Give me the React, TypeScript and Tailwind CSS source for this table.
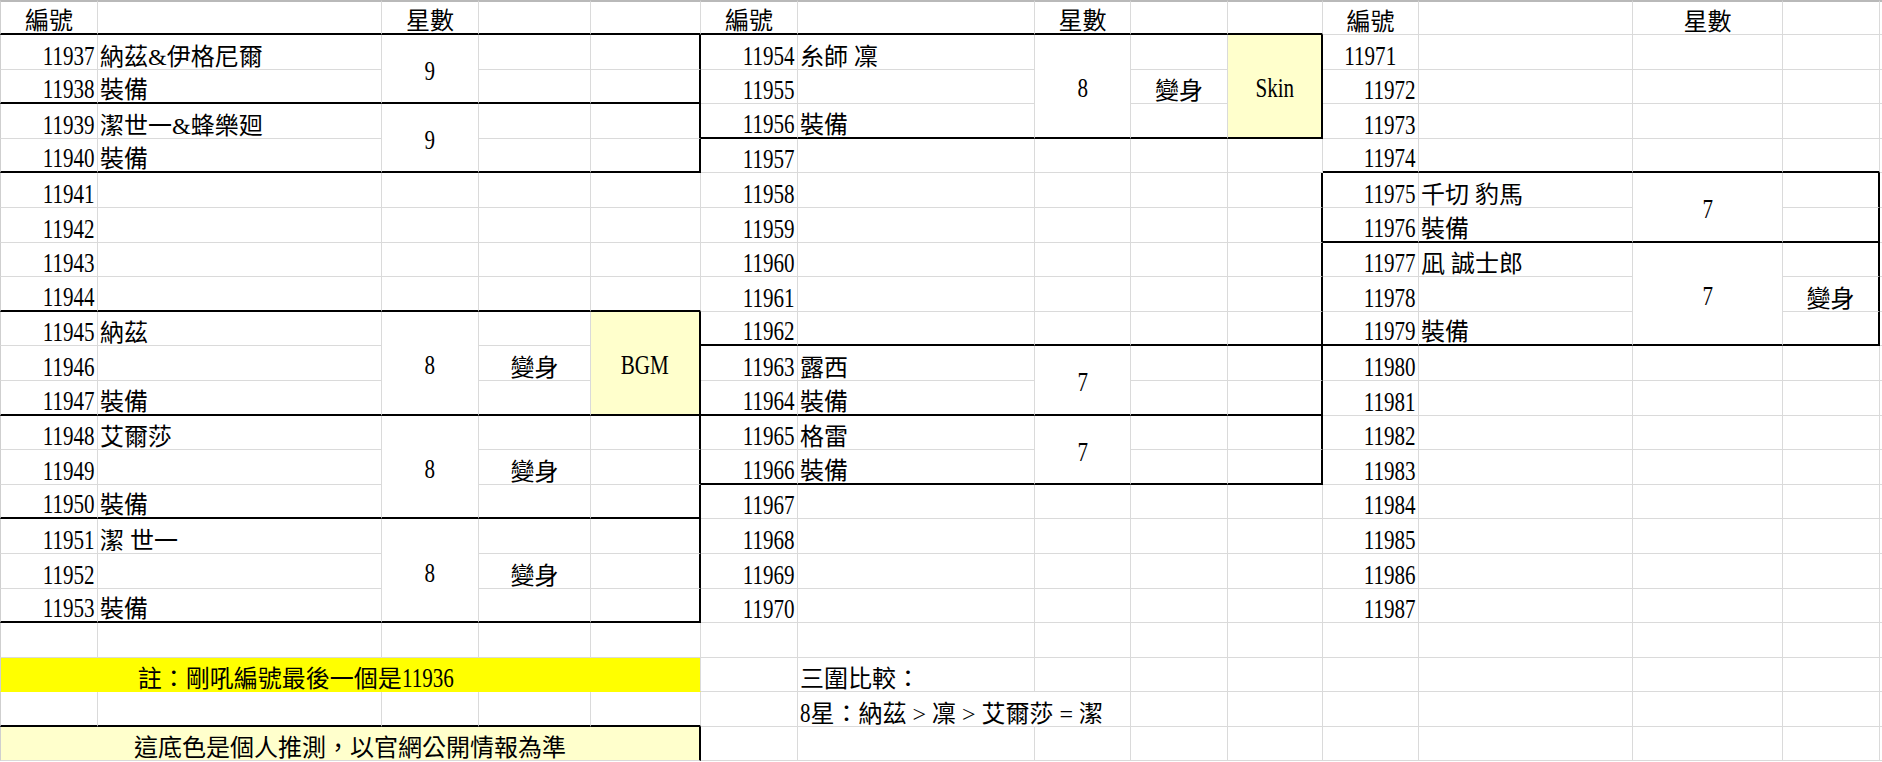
import type { ReactNode } from 'react';
import clsx from 'clsx';

type Align = 'left' | 'right' | 'center';

type Cell = {
  r: number;
  c: number;
  rs?: number;
  cs?: number;
  text?: ReactNode;
  align?: Align;
  middle?: boolean;
  fill?: 'note' | 'cream';
  pad?: string;
};

const ROWS = 22;
const COLS = 15;

const ROW_SPAN: Record<number, string> = { 1: '', 2: 'row-span-2', 3: 'row-span-3' };
const COL_SPAN: Record<number, string> = { 1: '', 2: 'col-span-2', 5: 'col-span-5' };

// the sheet's latin glyphs are tall and narrow
const Latin = ({
  children,
  origin = 'center',
  className,
}: {
  children: ReactNode;
  origin?: Align;
  className?: string;
}) => (
  <span
    className={clsx(
      'inline-block scale-x-[0.78] text-[27px] leading-[24px]',
      origin === 'right' ? 'origin-right' : origin === 'left' ? 'origin-left' : 'origin-center',
      className,
    )}
  >
    {children}
  </span>
);

// [firstRow, lastRow, firstCol, lastCol]
const boxes: [number, number, number, number][] = [
  [1, 2, 0, 4],
  [3, 4, 0, 4],
  [9, 11, 0, 4],
  [12, 14, 0, 4],
  [15, 17, 0, 4],
  [1, 3, 5, 9],
  [10, 11, 5, 9],
  [12, 13, 5, 9],
  [5, 6, 10, 13],
  [7, 9, 10, 13],
];

const hThick = new Set<string>();
const vThick = new Set<string>();
for (const [r0, r1, c0, c1] of boxes) {
  for (let c = c0; c <= c1; c++) {
    hThick.add(`${r0 - 1}:${c}`);
    hThick.add(`${r1}:${c}`);
  }
  for (let r = r0; r <= r1; r++) {
    if (c0 > 0) vThick.add(`${r}:${c0 - 1}`);
    vThick.add(`${r}:${c1}`);
  }
}
for (let c = 0; c <= 4; c++) hThick.add(`20:${c}`);
vThick.add('21:4');

const cells: Cell[] = [];

const heads: [number, string][] = [
  [0, '編號'],
  [2, '星數'],
  [5, '編號'],
  [7, '星數'],
  [10, '編號'],
  [12, '星數'],
];
heads.forEach(([c, text]) => cells.push({ r: 0, c, text, align: 'center' }));

for (let i = 0; i < 17; i++) {
  const r = i + 1;
  cells.push({ r, c: 0, text: <Latin origin="right">{11937 + i}</Latin>, align: 'right' });
  cells.push({ r, c: 5, text: <Latin origin="right">{11954 + i}</Latin>, align: 'right' });
  cells.push({
    r,
    c: 10,
    text: <Latin origin={i === 0 ? 'center' : 'right'}>{11971 + i}</Latin>,
    align: i === 0 ? 'center' : 'right',
  });
}

const names: [number, number, string][] = [
  [1, 1, '納茲&伊格尼爾'],
  [2, 1, '裝備'],
  [3, 1, '潔世一&蜂樂廻'],
  [4, 1, '裝備'],
  [9, 1, '納茲'],
  [11, 1, '裝備'],
  [12, 1, '艾爾莎'],
  [14, 1, '裝備'],
  [15, 1, '潔 世一'],
  [17, 1, '裝備'],
  [1, 6, '糸師 凜'],
  [3, 6, '裝備'],
  [10, 6, '露西'],
  [11, 6, '裝備'],
  [12, 6, '格雷'],
  [13, 6, '裝備'],
  [5, 11, '千切 豹馬'],
  [6, 11, '裝備'],
  [7, 11, '凪 誠士郎'],
  [9, 11, '裝備'],
];
names.forEach(([r, c, text]) => cells.push({ r, c, text, align: 'left' }));

// [row, rowSpan, col, value]
const stars: [number, number, number, string][] = [
  [1, 2, 2, '9'],
  [3, 2, 2, '9'],
  [9, 3, 2, '8'],
  [12, 3, 2, '8'],
  [15, 3, 2, '8'],
  [1, 3, 7, '8'],
  [10, 2, 7, '7'],
  [12, 2, 7, '7'],
  [5, 2, 12, '7'],
  [7, 3, 12, '7'],
];
stars.forEach(([r, rs, c, v]) =>
  cells.push({ r, rs, c, text: <Latin>{v}</Latin>, align: 'center', middle: true }),
);

const morphs: [number, number][] = [
  [10, 3],
  [13, 3],
  [16, 3],
  [2, 8],
  [8, 13],
];
morphs.forEach(([r, c]) => cells.push({ r, c, text: '變身', align: 'center' }));

cells.push({ r: 9, rs: 3, c: 4, text: <Latin>BGM</Latin>, align: 'center', middle: true, fill: 'cream' });
cells.push({ r: 1, rs: 3, c: 9, text: <Latin>Skin</Latin>, align: 'center', middle: true, fill: 'cream' });

cells.push({
  r: 19,
  c: 0,
  cs: 5,
  fill: 'note',
  align: 'center',
  pad: 'pr-[110px]',
  text: (
    <>
      註：剛吼編號最後一個是
      <Latin origin="left" className="-mr-[15px]">
        11936
      </Latin>
    </>
  ),
});
cells.push({ r: 19, c: 6, text: '三圍比較：', align: 'left' });
cells.push({
  r: 20,
  c: 6,
  cs: 2,
  align: 'left',
  text: (
    <>
      <Latin origin="left" className="-mr-[3px]">
        8
      </Latin>
      星：納茲 &gt; 凜 &gt; 艾爾莎 = 潔
    </>
  ),
});
cells.push({ r: 21, c: 0, cs: 5, fill: 'cream', align: 'center', text: '這底色是個人推測，以官網公開情報為準' });

const GridCell = ({ cell }: { cell: Cell }) => {
  const rs = cell.rs ?? 1;
  const cs = cell.cs ?? 1;
  const lastRow = cell.r + rs - 1;
  const lastCol = cell.c + cs - 1;
  const thickBottom = hThick.has(`${lastRow}:${cell.c}`);
  const thickRight = vThick.has(`${cell.r}:${lastCol}`);

  return (
    <div
      className={clsx(
        'flex min-w-0 whitespace-nowrap',
        ROW_SPAN[rs],
        COL_SPAN[cs],
        cell.middle ? 'items-center pt-[6px]' : 'items-end',
        cell.align === 'right'
          ? 'justify-end pr-[3px]'
          : cell.align === 'center'
            ? 'justify-center'
            : 'justify-start pl-[2px]',
        thickBottom
          ? 'border-b-2 border-b-black'
          : cell.fill === 'note'
            ? 'border-b border-b-[#ffff00]'
            : 'border-b border-b-[#dadada]',
        lastCol === COLS - 1
          ? ''
          : thickRight
            ? 'border-r-2 border-r-black'
            : 'border-r border-r-[#dadada]',
        cell.c === 0 && 'border-l border-l-[#cfcfcf]',
        cell.r === 0 && 'border-t-2 border-t-[#b9b9b9]',
        cell.fill === 'note' && 'bg-[#ffff00]',
        cell.fill === 'cream' && 'bg-[#ffffcc]',
        cell.pad,
      )}
    >
      {cell.text ? <span>{cell.text}</span> : null}
    </div>
  );
};

export default function App() {
  const start = new Map<string, Cell>();
  const covered = new Set<string>();
  for (const cell of cells) {
    start.set(`${cell.r}:${cell.c}`, cell);
    for (let r = cell.r; r < cell.r + (cell.rs ?? 1); r++)
      for (let c = cell.c; c < cell.c + (cell.cs ?? 1); c++)
        if (r !== cell.r || c !== cell.c) covered.add(`${r}:${c}`);
  }

  const items: ReactNode[] = [];
  for (let r = 0; r < ROWS; r++)
    for (let c = 0; c < COLS; c++) {
      const key = `${r}:${c}`;
      if (covered.has(key)) continue;
      items.push(<GridCell key={key} cell={start.get(key) ?? { r, c }} />);
    }

  return (
    <div className="grid h-[762px] w-[1882px] grid-cols-[98px_284px_97px_112px_110px_97px_237px_96px_97px_95px_96px_214px_150px_97px_2px] grid-rows-[35px_repeat(21,34.6px)] overflow-hidden bg-white font-['Liberation_Serif','Noto_Sans_CJK_TC',serif] text-[24px] leading-[24px] text-black">
      {items}
    </div>
  );
}
